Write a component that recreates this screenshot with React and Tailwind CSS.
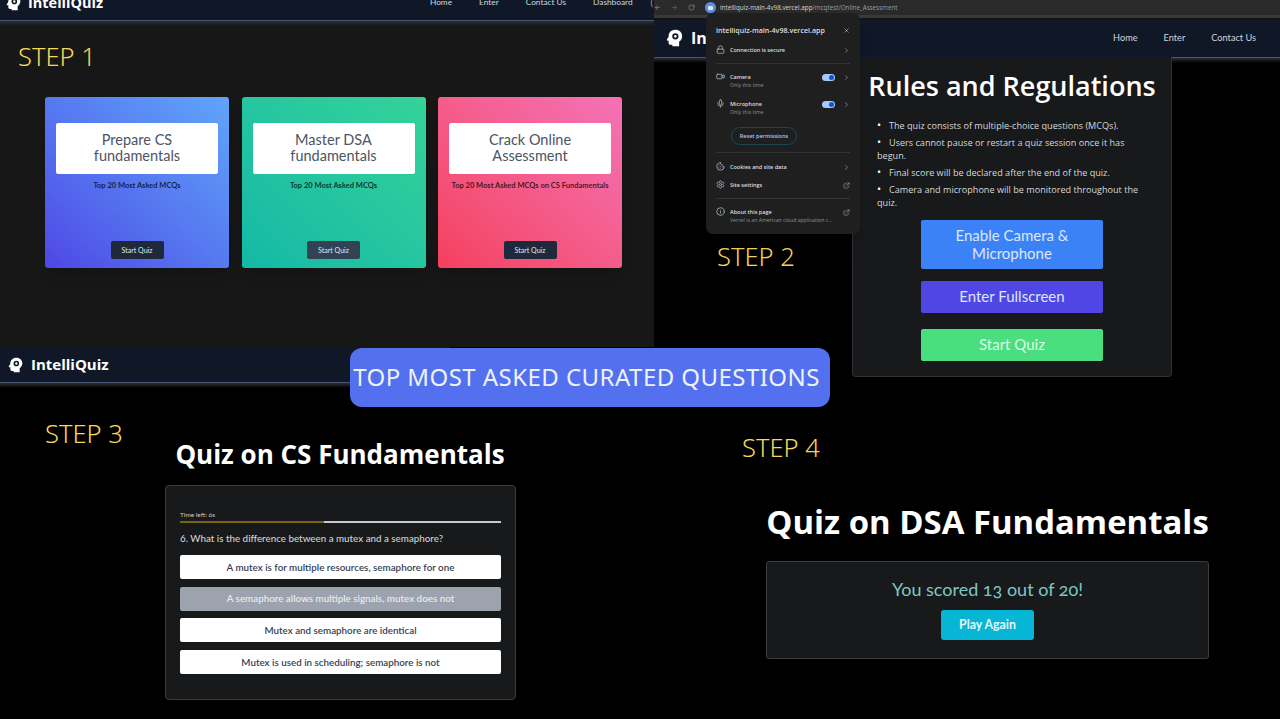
import React from 'react';
import { ArrowLeft, ArrowRight, RotateCw, X, ChevronRight, Lock, Video, Mic, Cookie, Settings, ExternalLink, Info } from 'lucide-react';

const raleway = 'font-["Lato","Open_Sans",sans-serif]';
const segoe = 'font-["Open_Sans","Noto_Sans",sans-serif]';

function BrainHead({ className }) {
  return (
    <svg viewBox="0 0 24 24" className={className} fill="currentColor">
      <path
        fillRule="evenodd"
        d="M12.5 1C7.3 1 3.5 4.700 3.500 9.500c0 .7-.2 1.200-.6 1.800L1.200 14c-.4.700.1 1.500.9 1.500h1.400v3c0 1.400 1.100 2.500 2.500 2.500h2.500v2h9v-6.200c2.400-1.500 4-4.200 4-7.300C21.500 4.500 17.700 1 12.500 1zm0 4.500a4.200 4.200 0 1 1 0 8.400 4.200 4.200 0 0 1 0-8.400zm0 2.400a1.800 1.800 0 1 0 0 3.600 1.800 1.800 0 0 0 0-3.600z"
      />
    </svg>
  );
}

function Nav({ className, logoClass, textClass, logoGap, links, linkClass, gapClass, children }) {
  return (
    <div className="w-full">
      <div className={`flex items-center justify-between bg-[#101828] ${className}`}>
        <div className={`flex items-center ${logoGap}`}>
          <BrainHead className={`text-white ${logoClass}`} />
          <span className={`${segoe} font-bold text-white ${textClass}`}>IntelliQuiz</span>
        </div>
        <div className={`flex items-center ${gapClass}`}>
          {links.map((l) => (
            <span key={l} className={`${raleway} text-[#d1d5db] ${linkClass}`}>{l}</span>
          ))}
          {children}
        </div>
      </div>
      <div className="h-[1px] bg-[#46566e]" />
      <div className="h-[5px] bg-linear-to-b from-[#2b2f36] to-transparent" />
    </div>
  );
}

function StepLabel({ className, children }) {
  return <div className={`absolute font-["Noto_Sans",sans-serif] font-light text-[25.5px] leading-none text-[#f7d858] ${className}`}>{children}</div>;
}

function TopicCard({ title, subtitle, gradient, btn }) {
  return (
    <div className={`flex h-[171px] w-[184px] flex-col items-center rounded-[3px] px-[11px] pt-[26px] pb-[9px] shadow-lg ${gradient}`}>
      <div className={`flex h-[51px] w-full items-center justify-center rounded-[2px] bg-white pb-[2px] text-center ${raleway} text-[14.5px] leading-[16px] text-[#4b5563]`}>
        {title}
      </div>
      <div className={`mt-[6px] whitespace-nowrap text-center ${raleway} text-[7.5px] font-bold text-black/75`}>{subtitle}</div>
      <div className={`mt-auto flex h-[18px] w-[53px] items-center justify-center rounded-[2px] ${btn} ${raleway} text-[7px] text-[#e5e7eb]`}>
        Start Quiz
      </div>
    </div>
  );
}

function PopupRow({ icon, label, sub, right, className = '' }) {
  return (
    <div className={`flex items-start gap-[5px] ${className}`}>
      <span className="mt-[-1px] flex w-[9px] justify-center text-[#b8bcc2]">{icon}</span>
      <div className="min-w-0 flex-1">
        <div className={`${segoe} text-[5.5px] leading-[8px] font-semibold text-[#dcdee1]`}>{label}</div>
        {sub && <div className={`${segoe} mt-[1px] truncate text-[5.2px] leading-[7px] text-[#8f9399]`}>{sub}</div>}
      </div>
      {right}
    </div>
  );
}

function Toggle() {
  return (
    <span className="mt-[1px] mr-[3px] flex h-[7px] w-[13px] items-center justify-end rounded-full bg-[#a8c7fa] pr-[1px]">
      <span className="h-[5px] w-[5px] rounded-full bg-[#0b57d0]" />
    </span>
  );
}

const chev = <ChevronRight size={7} className="mt-[1px] text-[#b8bcc2]" />;
const ext = <ExternalLink size={7} className="mt-[1px] text-[#9ca0a6]" />;

function SitePopup() {
  return (
    <div className="absolute top-[13px] left-[706px] z-20 flex h-[221px] w-[154px] flex-col rounded-[7px] bg-[#1f1f1f] px-[10px] pt-[13px] shadow-xl">
      <div className="flex items-center justify-between">
        <span className={`${segoe} text-[7.1px] leading-[9px] font-semibold text-[#dcdde0]`}>intelliquiz-main-4v98.vercel.app</span>
        <X size={7} className="text-[#c4c7c5]" />
      </div>
      <PopupRow className="mt-[11px]" icon={<Lock size={9} />} label="Connection is secure" right={chev} />
      <div className="mt-[9px] h-px bg-[#333436]" />
      <PopupRow className="mt-[9px]" icon={<Video size={9} />} label="Camera" sub="Only this time" right={<><Toggle />{chev}</>} />
      <PopupRow className="mt-[11px]" icon={<Mic size={9} />} label="Microphone" sub="Only this time" right={<><Toggle />{chev}</>} />
      <div className="mt-[11px] ml-[15px] flex h-[18px] w-[66px] items-center justify-center rounded-full border border-[#1e4456]">
        <span className={`${segoe} text-[5.5px] font-semibold text-[#a8c7fa]`}>Reset permissions</span>
      </div>
      <div className="mt-[7px] h-px bg-[#333436]" />
      <PopupRow className="mt-[10px]" icon={<Cookie size={9} />} label="Cookies and site data" right={chev} />
      <PopupRow className="mt-[10px]" icon={<Settings size={9} />} label="Site settings" right={ext} />
      <div className="mt-[9px] h-px bg-[#333436]" />
      <PopupRow className="mt-[9px]" icon={<Info size={9} />} label="About this page" sub="Vercel is an American cloud application c..." right={ext} />
    </div>
  );
}

function FirstPanel() {
  return (
    <div className="absolute top-0 left-0 h-[347px] w-[654px] overflow-hidden bg-[#171717]">
      <Nav
        className="h-[20px] pr-[1px] pb-[15px] pl-[6px]"
        logoClass="h-[16px] w-[16px]"
        logoGap="gap-[6px]"
        textClass="text-[14.5px]"
        links={['Home', 'Enter', 'Contact Us', 'Dashboard']}
        linkClass="text-[8.3px]"
        gapClass="gap-[27px]"
      >
        <span className={`${raleway} -ml-[9px] text-[9px] text-[#9ca3af]`}>(</span>
      </Nav>
      <div className="mt-[71px] flex gap-[12.5px] pl-[45px]">
        <TopicCard title={<>Prepare CS<br />fundamentals</>} subtitle="Top 20 Most Asked MCQs" gradient="bg-linear-to-tr from-[#4f46e5] to-[#60a5fa]" btn="bg-[#1e293b]" />
        <TopicCard title={<>Master DSA<br />fundamentals</>} subtitle="Top 20 Most Asked MCQs" gradient="bg-linear-to-tr from-[#14b8a6] to-[#34d399]" btn="bg-[#334155]" />
        <TopicCard title={<>Crack Online<br />Assessment</>} subtitle="Top 20 Most Asked MCQs on CS Fundamentals" gradient="bg-linear-to-tr from-[#f43f5e] to-[#f472b6]" btn="bg-[#1e293b]" />
      </div>
    </div>
  );
}

const rules = [
  ['The quiz consists of multiple-choice questions (MCQs).'],
  ['Users cannot pause or restart a quiz session once it has', 'begun.'],
  ['Final score will be declared after the end of the quiz.'],
  ['Camera and microphone will be monitored throughout the', 'quiz.'],
];

function SecondPanel() {
  return (
    <div className="absolute top-0 left-[654px] h-[380px] w-[626px] bg-black">
      <div className="flex h-[15px] items-center gap-[10px] bg-[#2a2a2a]">
        <ArrowLeft size={7} className="text-[#9a9a9a]" />
        <ArrowRight size={7} className="text-[#6a6a6a]" />
        <RotateCw size={7} className="text-[#9a9a9a]" />
        <span className="flex h-[11px] w-[11px] items-center justify-center rounded-full bg-[#5b8fd8]">
          <span className="h-[4px] w-[5px] rounded-[1px] bg-[#d8e6fa]" />
        </span>
        <span className={`${segoe} ml-[-6px] text-[6.28px] text-[#9a9da1]`}>
          <span className="text-[#d4d6d9]">intelliquiz-main-4v98.vercel.app</span>/mcqtest/Online_Assessment
        </span>
      </div>
      <div className="h-[3px] bg-[#3a3a3a]" />
      <div className="h-[1px] bg-[#111]" />
      <Nav
        className="h-[38px] pr-[24px] pl-[12px]"
        logoClass="h-[18px] w-[18px]"
        logoGap="gap-[7px]"
        textClass="text-[16px]"
        links={['Home', 'Enter', 'Contact Us']}
        linkClass="text-[9.2px]"
        gapClass="gap-[26px]"
      />
      <div className="absolute top-[57px] left-[198px] h-[320px] w-[320px] rounded-b-[4px] border-x border-b border-[#2f3134] bg-[#18191b] px-[10px] pt-[12px]">
        <h1 className={`${segoe} text-center text-[27px] leading-[34px] font-semibold whitespace-nowrap text-white`}>Rules and Regulations</h1>
        <ul className={`${segoe} mt-[16px] flex flex-col gap-[4px] px-[14px] text-[9.1px] leading-[13px] text-[#d8d8d8]`}>
          {rules.map(([line, rest]) => (
            <li key={line}>
              <span className="inline-block w-[12px] text-[11px] leading-none text-white">•</span>
              {line}
              {rest && <div>{rest}</div>}
            </li>
          ))}
        </ul>
        <div className={`mt-[11px] flex flex-col items-center ${raleway} text-[15px] leading-[17.500px] text-[#dbe8ff]`}>
          <div className="flex h-[49px] w-[182px] items-center justify-center rounded-[2px] bg-[#3b82f6] text-center">Enable Camera &<br />Microphone</div>
          <div className="mt-[12px] flex h-[32px] w-[182px] items-center justify-center rounded-[2px] bg-[#4f46e5]">Enter Fullscreen</div>
          <div className="mt-[16px] flex h-[32px] w-[182px] items-center justify-center rounded-[2px] bg-[#4ade80] text-[#dcfce7]">Start Quiz</div>
        </div>
      </div>
    </div>
  );
}

function ThirdPanel() {
  const options = [
    'A mutex is for multiple resources, semaphore for one',
    'A semaphore allows multiple signals, mutex does not',
    'Mutex and semaphore are identical',
    'Mutex is used in scheduling; semaphore is not',
  ];
  return (
    <div className="absolute top-[347px] left-0 h-[372px] w-[654px]">
      <div className="w-[450px]">
        <Nav
          className="h-[35px] pr-[20px] pl-[8px]"
          logoClass="h-[16px] w-[16px]"
          logoGap="gap-[7px]"
          textClass="text-[15px]"
          links={[]}
          linkClass=""
          gapClass=""
        />
      </div>
      <h2 className={`${segoe} mt-[49px] w-[680px] text-center text-[26px] leading-[34px] font-bold text-white`}>Quiz on CS Fundamentals</h2>
      <div className="mt-[14px] ml-[165px] h-[215px] w-[351px] rounded-[4px] border border-[#3a3c40] bg-[#18191b] px-[14px] pt-[25px]">
        <div className={`${raleway} text-[6.5px] leading-[8px] text-[#c9cbce]`}>Time left: 6s</div>
        <div className="mt-[2px] flex h-[2px] w-full bg-[#c8c9cb]">
          <div className="h-full w-[45%] bg-[#7a6410]" />
        </div>
        <div className={`${raleway} mt-[9px] text-[9.8px] leading-[12px] font-medium text-[#d1d3d6]`}>6. What is the difference between a mutex and a semaphore?</div>
        <div className="mt-[11px] flex flex-col gap-[7.7px]">
          {options.map((o, i) => (
            <div
              key={o}
              className={`flex h-[24px] items-center justify-center rounded-[2px] ${raleway} text-[9.8px] font-semibold ${i === 1 ? 'bg-[#9ca3af] text-[#e8e9eb]' : 'bg-white text-[#374151]'}`}
            >
              {o}
            </div>
          ))}
        </div>
      </div>
    </div>
  );
}

function ResultPanel() {
  return (
    <div className="absolute top-[503px] left-[766px] w-[443px]">
      <h2 className={`${segoe} text-center text-[32.9px] leading-[38px] font-bold whitespace-nowrap text-white`}>Quiz on DSA Fundamentals</h2>
      <div className="mt-[20px] flex h-[98px] flex-col items-center rounded-[3px] border border-[#3a3c40] bg-[#18191b] pt-[15px]">
        <div className={`${raleway} text-[18px] leading-[24px] text-[#7cc8c4] oldstyle-nums`}>You scored 13 out of 20!</div>
        <div className={`mt-[9px] flex h-[30px] w-[93px] items-center justify-center rounded-[3px] bg-[#06b6d4] ${raleway} text-[12.3px] font-bold text-[#e6f7fb]`}>Play Again</div>
      </div>
    </div>
  );
}

export default function App() {
  return (
    <div className="relative h-[719px] w-[1280px] overflow-hidden bg-black">
      <FirstPanel />
      <SecondPanel />
      <ThirdPanel />
      <ResultPanel />
      <SitePopup />
      <StepLabel className="top-[44px] left-[18px]">STEP 1</StepLabel>
      <StepLabel className="top-[244px] left-[717px]">STEP 2</StepLabel>
      <StepLabel className="top-[421px] left-[45px]">STEP 3</StepLabel>
      <StepLabel className="top-[435px] left-[742px]">STEP 4</StepLabel>
      <div className={`absolute top-[348px] left-[350px] z-10 flex h-[59px] w-[480px] items-center justify-center rounded-[12px] bg-[#5370ef] pr-[7px] pb-[2px] font-["Noto_Sans",sans-serif] text-[24px] tracking-[0.45px] whitespace-nowrap text-[#eef2ff]`}>
        TOP MOST ASKED CURATED QUESTIONS
      </div>
    </div>
  );
}
